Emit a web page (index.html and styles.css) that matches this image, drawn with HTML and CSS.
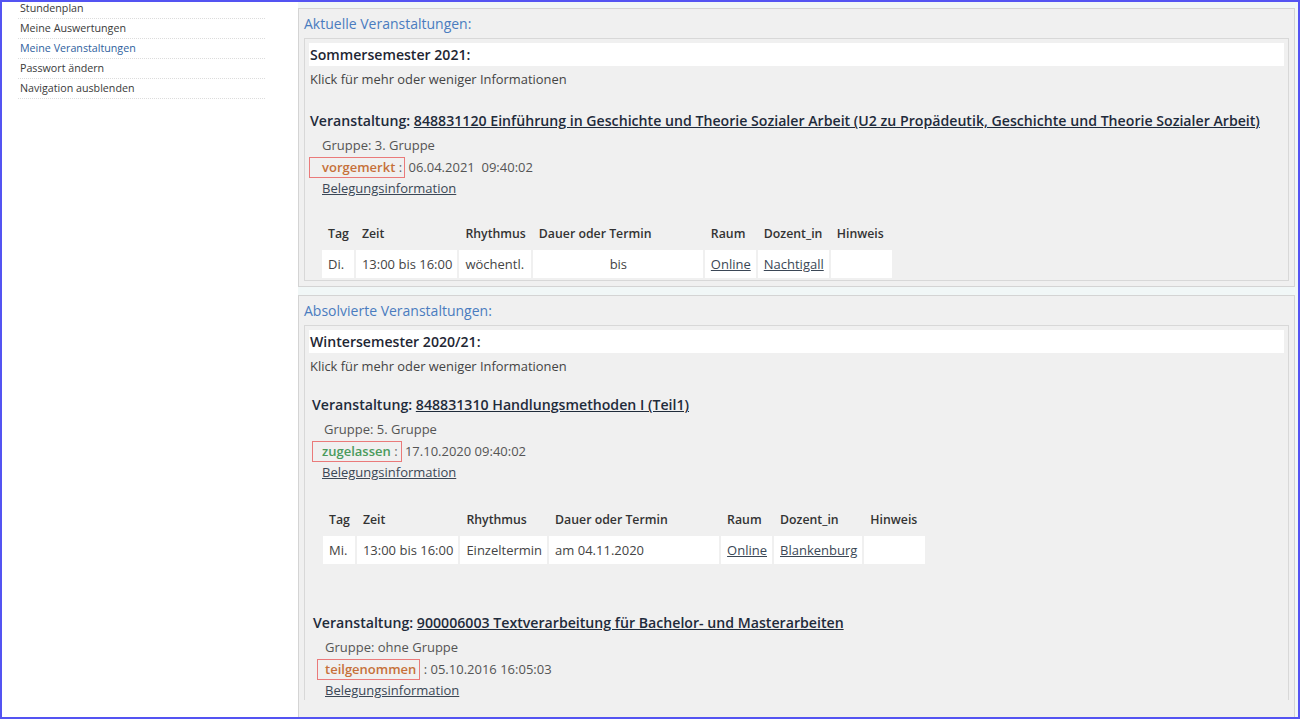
FILE: index.html
```html
<!DOCTYPE html>
<html lang="de">
<head>
<meta charset="utf-8">
<title>Meine Veranstaltungen</title>
<link rel="stylesheet" href="styles.css">
</head>
<body>
<div class="frame">
  <nav class="side">
    <ul class="menu">
      <li><a href="#">Stundenplan</a></li>
      <li><a href="#">Meine Auswertungen</a></li>
      <li class="active"><a href="#">Meine Veranstaltungen</a></li>
      <li><a href="#">Passwort ändern</a></li>
      <li><a href="#">Navigation ausblenden</a></li>
    </ul>
  </nav>
  <main class="main">
    <section class="group">
      <div class="legend">Aktuelle Veranstaltungen:</div>
      <div class="semester">
        <div class="sem-title">Sommersemester 2021:</div>
        <div class="hint">Klick für mehr oder weniger Informationen</div>
        <div class="course">
          <div class="course-title">Veranstaltung: <a href="#">848831120 Einführung in Geschichte und Theorie Sozialer Arbeit (U2 zu Propädeutik, Geschichte und Theorie Sozialer Arbeit)</a></div>
          <div class="meta first">Gruppe: 3. Gruppe</div>
          <div class="meta status-line"><span class="mark mark-a"><span class="st st-orange">vorgemerkt</span> :</span> 06.04.2021&nbsp; 09:40:02</div>
          <div class="meta info"><a href="#">Belegungsinformation</a></div>
          <table class="dates">
            <tr><th>Tag</th><th>Zeit</th><th>Rhythmus</th><th class="w-dauer">Dauer oder Termin</th><th>Raum</th><th>Dozent_in</th><th class="w-hint">Hinweis</th></tr>
            <tr><td>Di.</td><td>13:00 bis 16:00</td><td>wöchentl.</td><td class="center">bis</td><td><a href="#">Online</a></td><td><a href="#">Nachtigall</a></td><td></td></tr>
          </table>
        </div>
      </div>
    </section>
    <section class="group last">
      <div class="legend">Absolvierte Veranstaltungen:</div>
      <div class="semester">
        <div class="sem-title">Wintersemester 2020/21:</div>
        <div class="hint">Klick für mehr oder weniger Informationen</div>
        <div class="course course-b">
          <div class="course-title">Veranstaltung: <a href="#">848831310 Handlungsmethoden I (Teil1)</a></div>
          <div class="meta first shift">Gruppe: 5. Gruppe</div>
          <div class="meta status-line"><span class="mark mark-b"><span class="st st-green">zugelassen</span> :</span> 17.10.2020 09:40:02</div>
          <div class="meta info"><a href="#">Belegungsinformation</a></div>
          <table class="dates dates-b">
            <tr><th>Tag</th><th>Zeit</th><th>Rhythmus</th><th class="w-dauer">Dauer oder Termin</th><th>Raum</th><th>Dozent_in</th><th class="w-hint">Hinweis</th></tr>
            <tr><td>Mi.</td><td>13:00 bis 16:00</td><td>Einzeltermin</td><td>am 04.11.2020</td><td><a href="#">Online</a></td><td><a href="#">Blankenburg</a></td><td></td></tr>
          </table>
        </div>
        <div class="course course-c">
          <div class="course-title">Veranstaltung: <a href="#">900006003 Textverarbeitung für Bachelor- und Masterarbeiten</a></div>
          <div class="meta first">Gruppe: ohne Gruppe</div>
          <div class="meta status-line"><span class="mark mark-c"><span class="st st-orange">teilgenommen</span></span> : 05.10.2016 16:05:03</div>
          <div class="meta info"><a href="#">Belegungsinformation</a></div>
        </div>
      </div>
    </section>
  </main>
</div>
</body>
</html>
```

FILE: styles.css
```css
* { box-sizing: border-box; }
html, body { margin: 0; padding: 0; }
body {
  font-family: "Open Sans", "Liberation Sans", sans-serif;
  color: #444;
  background: #fff;
}
a { color: inherit; }

.frame {
  position: relative;
  width: 1300px;
  height: 719px;
  overflow: hidden;
  display: flex;
  background: #fff;
}
.frame::after {
  content: "";
  position: absolute;
  inset: 0;
  border: 2px solid #5454f2;
  pointer-events: none;
}

/* sidebar */
.side {
  width: 298px;
  flex: none;
  background: #fff;
}
.menu {
  list-style: none;
  margin: -1px 0 0 18px;
  padding: 0;
  width: 247px;
}
.menu li {
  height: 20px;
  border-bottom: 1px dotted #dcdcdc;
  font-size: 10.7px;
  line-height: 19px;
  padding-left: 2px;
}
.menu a { text-decoration: none; color: #3a3a3a; }
.menu li.active a { color: #2f5f9e; }

/* main */
.main {
  flex: 1;
  background: #f1f7f7;
  padding: 8px 5px 0 0;
  display: flex;
  flex-direction: column;
  gap: 8px;
}
.group {
  border: 1px solid #d4d4d4;
  background: #f0f0f0;
  padding: 0 5px 5px 5px;
}
.group.last { flex: 1; }
.legend {
  color: #4a7cbf;
  font-size: 14px;
  line-height: 20px;
  padding: 5px 0 4px 0;
}
.semester {
  border: 1px solid #d8d8d8;
  padding: 4px 4px 0 4px;
}
.group.last .semester { border-bottom: none; }
.sem-title {
  background: #fff;
  height: 23px;
  line-height: 23px;
  padding-left: 1px;
  font-size: 14.1px;
  font-weight: 600;
  color: #1e2633;
}
.hint {
  font-size: 12.9px;
  line-height: 20px;
  margin-top: 3px;
  padding-left: 1px;
  color: #444;
}
.course { margin-top: 20px; padding-left: 1px; }
.course-b { margin-top: 17px; padding-left: 3px; }
.course-c { margin-top: 45px; padding-left: 4px; }
.course-title {
  font-size: 14.15px;
  font-weight: 600;
  line-height: 24px;
  color: #1f2b3b;
}
.meta {
  font-size: 13px;
  line-height: 22px;
  padding-left: 12px;
  color: #555;
}
.meta.first { margin-top: 1px; }
.meta.info { line-height: 20px; }
.meta a { color: #3b4756; }
.course-b .meta { padding-left: 10px; }
.course-b .meta.shift { padding-left: 12px; }
.mark {
  display: inline-block;
  border: 1px solid #ea7a7a;
  line-height: 19px;
  color: #666;
}
.mark-a { margin-left: -13px; padding: 0 2px 0 12px; }
.mark-b { margin-left: -10px; padding: 0 3px 0 9px; }
.mark-c { margin-left: -8px; padding: 0 3px 0 7px; }
.st { font-weight: 600; }
.st-orange { color: #c6703a; }
.st-green { color: #4a9a5c; }

.dates {
  border-collapse: separate;
  border-spacing: 2px;
  margin: 22px 0 0 10px;
  font-size: 13px;
}
.dates-b { margin: 24px 0 0 9px; }
.dates th {
  text-align: left;
  font-weight: 600;
  font-size: 12.3px;
  color: #333;
  height: 26px;
  padding: 0 5px 4px 6px;
  white-space: nowrap;
}
.dates td {
  background: #fff;
  height: 28px;
  padding: 0 5px 0 6px;
  color: #444;
  white-space: nowrap;
}
.dates td a { color: #3b4756; }
.dates .center { text-align: center; }
.w-dauer { width: 170px; }
.w-hint { width: 61px; }
```
